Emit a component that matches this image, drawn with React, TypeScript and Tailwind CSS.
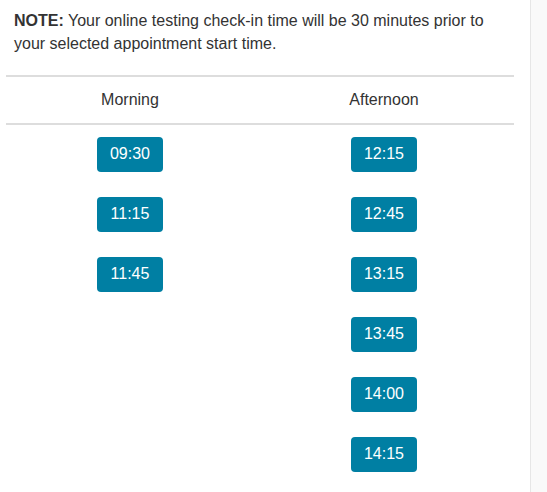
import React from "react";

const morning = ["09:30", "11:15", "11:45"];
const afternoon = ["12:15", "12:45", "13:15", "13:45", "14:00", "14:15"];

function Slot({ t }: { t: string }) {
  return (
    <button className="w-[66px] h-[35px] rounded-[4px] bg-[#007fa3] text-white text-[16px] leading-none flex items-center justify-center">
      {t}
    </button>
  );
}

export default function App() {
  return (
    <div
      className="flex w-[547px] h-[492px] overflow-hidden bg-white text-[#333333]"
      style={{ fontFamily: '"Liberation Sans", Arial, sans-serif' }}
    >
      <div className="w-[530px] shrink-0">
        <p className="pt-[10px] pl-[14px] pr-[40px] text-[16px] leading-[22.86px]">
          <b>NOTE:</b> Your online testing check-in time will be 30 minutes prior to your selected appointment start time.
        </p>
        <div className="ml-[6px] w-[508px] mt-[19px]">
          <div className="grid grid-cols-[248px_260px] border-y-2 border-[#dddddd] h-[50px] items-center text-[16px]">
            <div className="text-center">Morning</div>
            <div className="text-center">Afternoon</div>
          </div>
          <div className="grid grid-cols-[248px_260px] pt-[12px]">
            <div className="flex flex-col items-center gap-[25px]">
              {morning.map((t) => (
                <Slot key={t} t={t} />
              ))}
            </div>
            <div className="flex flex-col items-center gap-[25px]">
              {afternoon.map((t) => (
                <Slot key={t} t={t} />
              ))}
            </div>
          </div>
        </div>
      </div>
      <div className="flex-1 bg-[#f9f9f9] border-l border-[#e6e6e6]" />
    </div>
  );
}
